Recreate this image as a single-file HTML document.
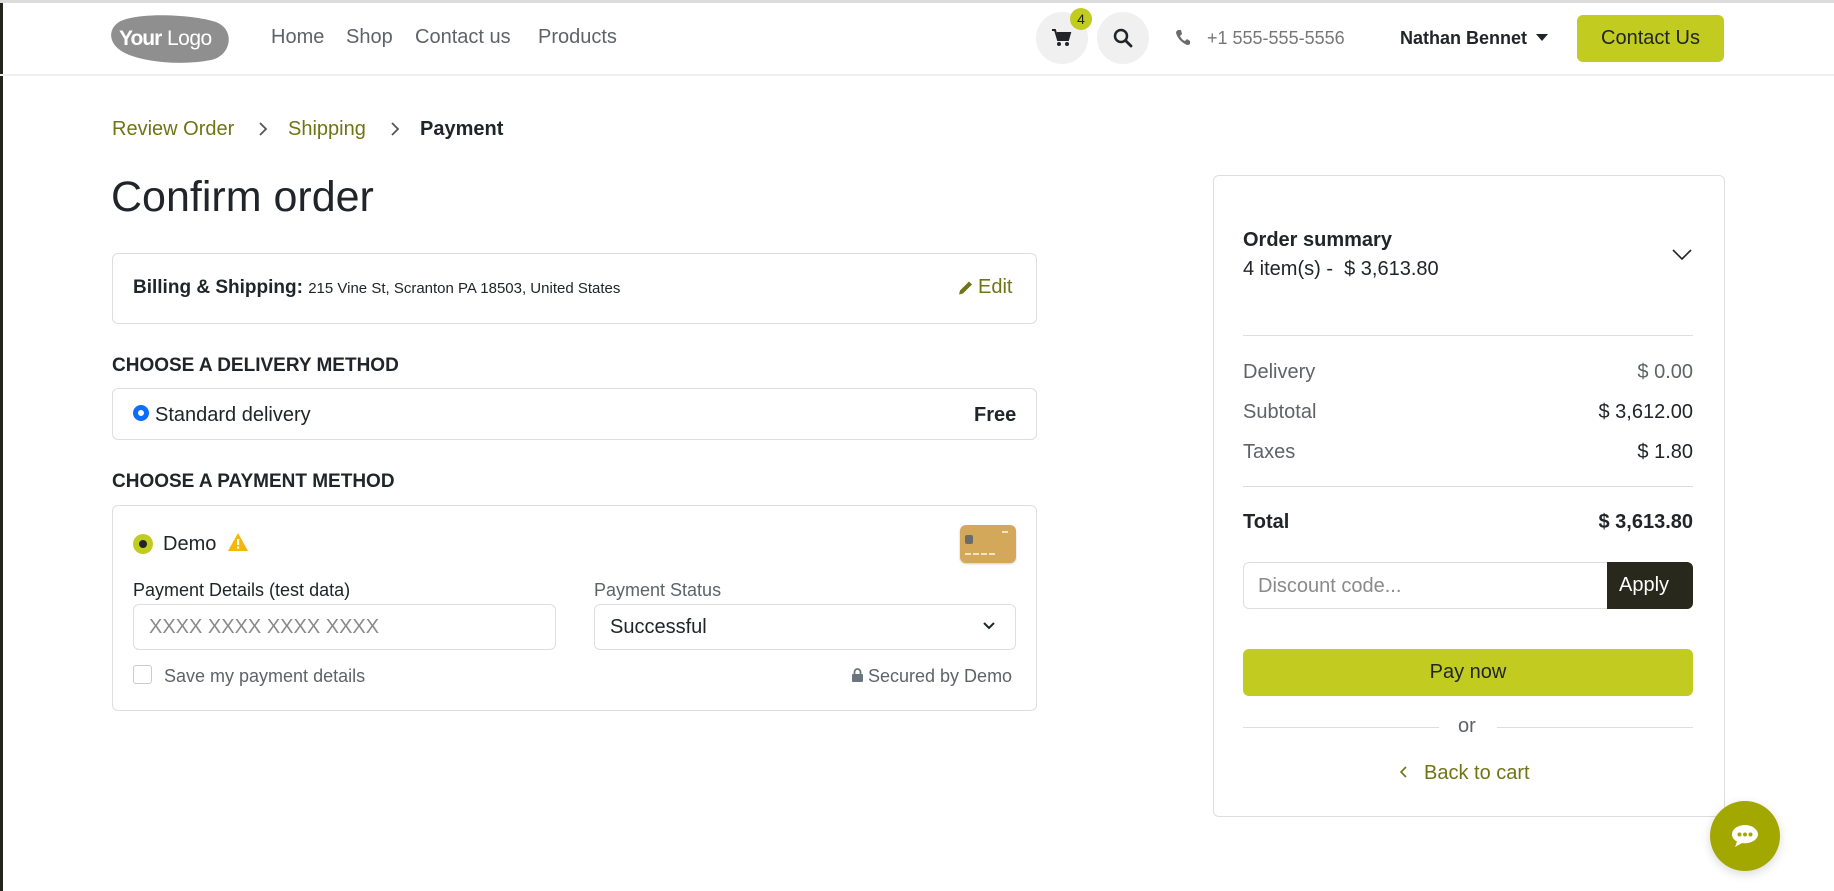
<!DOCTYPE html>
<html><head><meta charset="utf-8"><style>
*{box-sizing:border-box;margin:0;padding:0}
body{width:1834px;height:891px;overflow:hidden;background:#fff;font-family:"Liberation Sans",Arial,sans-serif;color:#212529;position:relative;font-size:19px}
.a{position:absolute;white-space:nowrap}
.box{position:absolute;border:1px solid #dedede;border-radius:6px;background:#fff}
.olive{color:#6f7515}
.gray{color:#5f6368}
.line{position:absolute;height:1px;background:#dedede}
</style></head><body>
<div class="a" style="left:0;top:0;width:3px;height:891px;background:#23241c"></div>
<div class="a" style="left:0;top:0;width:1834px;height:3px;background:#dcdcdc"></div>
<div class="a" style="left:0;top:74px;width:1834px;height:2px;background:#efefef"></div>
<svg class="a" style="left:111px;top:14px" width="122" height="50" viewBox="0 0 122 50"><path d="M8 8 C25 -2 80 0 105 8 C125 16 120 42 100 46 C70 52 30 48 12 38 C-2 30 -4 16 8 8Z" fill="#8f8f8f"/><text x="8" y="31" font-family="Liberation Sans" font-size="21" font-weight="bold" fill="#fff" letter-spacing="-1">Your</text><text x="56" y="31" font-family="Liberation Sans" font-size="21" fill="#fff" letter-spacing="-0.5">Logo</text></svg>
<div class="a gray" style="left:271px;top:26px;font-size:20px">Home</div>
<div class="a gray" style="left:346px;top:26px;font-size:20px">Shop</div>
<div class="a gray" style="left:415px;top:26px;font-size:20px">Contact us</div>
<div class="a gray" style="left:538px;top:26px;font-size:20px">Products</div>
<div class="a" style="left:1036px;top:12px;width:52px;height:52px;border-radius:50%;background:#f0f0f0"></div>
<svg class="a" style="left:1052px;top:29px" width="20" height="18" viewBox="0 0 20 18"><path d="M0 1h3l3 10h10l2-7H5" fill="#212529" stroke="#212529" stroke-width="2"/><circle cx="7" cy="15" r="2" fill="#212529"/><circle cx="15" cy="15" r="2" fill="#212529"/></svg>
<div class="a" style="left:1070px;top:8px;width:22px;height:22px;border-radius:50%;background:#c2cb1f;font-size:14px;text-align:center;line-height:22px;color:#212529">4</div>
<div class="a" style="left:1097px;top:12px;width:52px;height:52px;border-radius:50%;background:#f0f0f0"></div>
<svg class="a" style="left:1113px;top:28px" width="20" height="20" viewBox="0 0 20 20"><circle cx="8" cy="8" r="6" fill="none" stroke="#212529" stroke-width="2.5"/><path d="M12.5 12.5L18 18" stroke="#212529" stroke-width="2.8" stroke-linecap="round"/></svg>
<svg class="a" style="left:1175px;top:29px" width="16" height="17" viewBox="0 0 16 17"><path d="M3 1 L6 1 L7 5 L5 7 Q7 11 10 12 L12 10 L15 12 L15 15 Q13 17 10 15 Q3 11 1 4 Q1 2 3 1Z" fill="#6c6c6c"/></svg>
<div class="a gray" style="left:1207px;top:28px;font-size:18px;color:#777">+1 555-555-5556</div>
<div class="a" style="left:1400px;top:28px;font-size:18px;font-weight:bold;color:#212529">Nathan Bennet</div>
<div class="a" style="left:1536px;top:34px;width:0;height:0;border-left:6px solid transparent;border-right:6px solid transparent;border-top:7px solid #212529"></div>
<div class="a" style="left:1577px;top:15px;width:147px;height:47px;border-radius:6px;background:#c2cb1f;font-size:20px;text-align:center;line-height:47px;color:#212529">Contact Us</div>

<div class="a olive" style="left:112px;top:118px;font-size:20px">Review Order</div>
<svg class="a" style="left:258px;top:121px" width="10" height="16" viewBox="0 0 10 16"><path d="M2 2l6 6-6 6" fill="none" stroke="#555" stroke-width="1.8"/></svg>
<div class="a olive" style="left:288px;top:118px;font-size:20px">Shipping</div>
<svg class="a" style="left:390px;top:121px" width="10" height="16" viewBox="0 0 10 16"><path d="M2 2l6 6-6 6" fill="none" stroke="#555" stroke-width="1.8"/></svg>
<div class="a" style="left:420px;top:118px;font-size:20px;font-weight:bold;color:#212529">Payment</div>
<div class="a" style="left:111px;top:173px;font-size:43px;color:#212529">Confirm order</div>

<div class="box" style="left:112px;top:253px;width:925px;height:71px"></div>
<div class="a" style="left:133px;top:277px;font-size:19px;font-weight:bold">Billing &amp; Shipping: <span style="font-weight:normal;font-size:15px">215 Vine St, Scranton PA 18503, United States</span></div>
<svg class="a" style="left:958px;top:279px" width="16" height="17" viewBox="0 0 16 16"><path d="M1 15l1-4 9-9 3 3-9 9z" fill="#6f7515"/></svg>
<div class="a olive" style="left:978px;top:276px;font-size:20px">Edit</div>

<div class="a" style="left:112px;top:355px;font-size:19px;font-weight:bold">CHOOSE A DELIVERY METHOD</div>
<div class="box" style="left:112px;top:388px;width:925px;height:52px"></div>
<div class="a" style="left:134px;top:406px;width:14px;height:14px;border-radius:50%;border:4px solid #0d6efd;background:#fff;box-shadow:0 0 0 1px #0d6efd"></div>
<div class="a" style="left:155px;top:404px;font-size:20px">Standard delivery</div>
<div class="a" style="left:974px;top:404px;font-size:20px;font-weight:bold">Free</div>

<div class="a" style="left:112px;top:471px;font-size:19px;font-weight:bold">CHOOSE A PAYMENT METHOD</div>
<div class="box" style="left:112px;top:505px;width:925px;height:206px"></div>
<div class="a" style="left:133px;top:534px;width:20px;height:20px;border-radius:50%;background:#c2cb1f"></div>
<div class="a" style="left:139px;top:540px;width:8px;height:8px;border-radius:50%;background:#212529"></div>
<div class="a" style="left:163px;top:533px;font-size:20px">Demo</div>
<svg class="a" style="left:227px;top:532px" width="22" height="20" viewBox="0 0 22 20"><path d="M11 1L21 19H1Z" fill="#f5b800"/><rect x="10" y="7" width="2.2" height="6" fill="#fff"/><rect x="10" y="14.5" width="2.2" height="2.2" fill="#fff"/></svg>
<div class="a" style="left:960px;top:525px;width:56px;height:38px;border-radius:6px;background:#d4a85a;box-shadow:0 1px 2px rgba(0,0,0,.2)"></div>
<div class="a" style="left:965px;top:535px;width:8px;height:9px;border-radius:2px;background:#6b6b6b"></div>
<div class="a" style="left:1002px;top:531px;width:6px;height:2px;background:#f3e3c3"></div>
<div class="a" style="left:965px;top:553px;width:30px;height:2px;background:repeating-linear-gradient(90deg,#f3e3c3 0 6px,transparent 6px 8px)"></div>
<div class="a" style="left:133px;top:580px;font-size:18px">Payment Details (test data)</div>
<div class="a gray" style="left:594px;top:580px;font-size:18px">Payment Status</div>
<div class="box" style="left:133px;top:604px;width:423px;height:46px"></div>
<div class="a" style="left:149px;top:616px;font-size:20px;color:#8a8a8a">XXXX XXXX XXXX XXXX</div>
<div class="box" style="left:594px;top:604px;width:422px;height:46px"></div>
<div class="a" style="left:610px;top:616px;font-size:20px">Successful</div>
<svg class="a" style="left:982px;top:621px" width="14" height="10" viewBox="0 0 14 10"><path d="M2 2l5 5 5-5" fill="none" stroke="#212529" stroke-width="2"/></svg>
<div class="a" style="left:133px;top:665px;width:19px;height:19px;border:1px solid #ccc;border-radius:3px"></div>
<div class="a gray" style="left:164px;top:666px;font-size:18px">Save my payment details</div>
<svg class="a" style="left:852px;top:668px" width="11" height="14" viewBox="0 0 11 14"><path d="M2.5 6V4a3 3 0 0 1 6 0v2" fill="none" stroke="#6c757d" stroke-width="1.8"/><rect x="0" y="6" width="11" height="8" rx="1" fill="#6c757d"/></svg>
<div class="a gray" style="left:868px;top:666px;font-size:18px">Secured by Demo</div>

<div class="box" style="left:1213px;top:175px;width:512px;height:642px"></div>
<div class="a" style="left:1243px;top:229px;font-size:20px;font-weight:bold">Order summary</div>
<div class="a" style="left:1243px;top:258px;font-size:20px">4 item(s) -&nbsp; $ 3,613.80</div>
<svg class="a" style="left:1672px;top:249px" width="20" height="12" viewBox="0 0 20 12"><path d="M1 1l9 9 9-9" fill="none" stroke="#212529" stroke-width="1.6"/></svg>
<div class="line" style="left:1243px;top:335px;width:450px"></div>
<div class="a gray" style="left:1243px;top:361px;font-size:20px">Delivery</div>
<div class="a gray" style="right:141px;top:361px;font-size:20px">$ 0.00</div>
<div class="a gray" style="left:1243px;top:401px;font-size:20px">Subtotal</div>
<div class="a" style="right:141px;top:401px;font-size:20px">$ 3,612.00</div>
<div class="a gray" style="left:1243px;top:441px;font-size:20px">Taxes</div>
<div class="a" style="right:141px;top:441px;font-size:20px">$ 1.80</div>
<div class="line" style="left:1243px;top:486px;width:450px"></div>
<div class="a" style="left:1243px;top:511px;font-size:20px;font-weight:bold">Total</div>
<div class="a" style="right:141px;top:511px;font-size:20px;font-weight:bold">$ 3,613.80</div>
<div class="box" style="left:1243px;top:562px;width:370px;height:47px;border-radius:6px 0 0 6px"></div>
<div class="a" style="left:1258px;top:575px;font-size:20px;color:#8a8a8a">Discount code...</div>
<div class="a" style="left:1607px;top:562px;width:86px;height:47px;border-radius:0 6px 6px 0;background:#28281d;color:#fff;font-size:20px;line-height:47px;padding-left:12px">Apply</div>
<div class="a" style="left:1243px;top:649px;width:450px;height:47px;border-radius:6px;background:#c2cb1f;text-align:center;line-height:47px;font-size:20px">Pay now</div>
<div class="line" style="left:1243px;top:727px;width:196px"></div>
<div class="line" style="left:1497px;top:727px;width:196px"></div>
<div class="a gray" style="left:1458px;top:715px;font-size:20px">or</div>
<svg class="a" style="left:1400px;top:766px" width="8" height="12" viewBox="0 0 8 12"><path d="M6 1L1 6l5 5" fill="none" stroke="#6f7515" stroke-width="1.6"/></svg>
<div class="a olive" style="left:1424px;top:762px;font-size:20px">Back to cart</div>

<div class="a" style="left:1710px;top:801px;width:70px;height:70px;border-radius:50%;background:#a2a800;box-shadow:0 3px 10px rgba(0,0,0,.15)"></div>
<svg class="a" style="left:1731px;top:824px" width="28" height="24" viewBox="0 0 28 24"><path d="M14 1C6.5 1 1 5.5 1 10.5c0 3 2 5.5 5 7L4 23l7-4c1 .2 2 .3 3 .3 7.5 0 13-4.5 13-9S21.5 1 14 1z" fill="#fff"/><circle cx="8.5" cy="10.5" r="2" fill="#a2a800"/><circle cx="14" cy="10.5" r="2" fill="#a2a800"/><circle cx="19.5" cy="10.5" r="2" fill="#a2a800"/></svg>
</body></html>
